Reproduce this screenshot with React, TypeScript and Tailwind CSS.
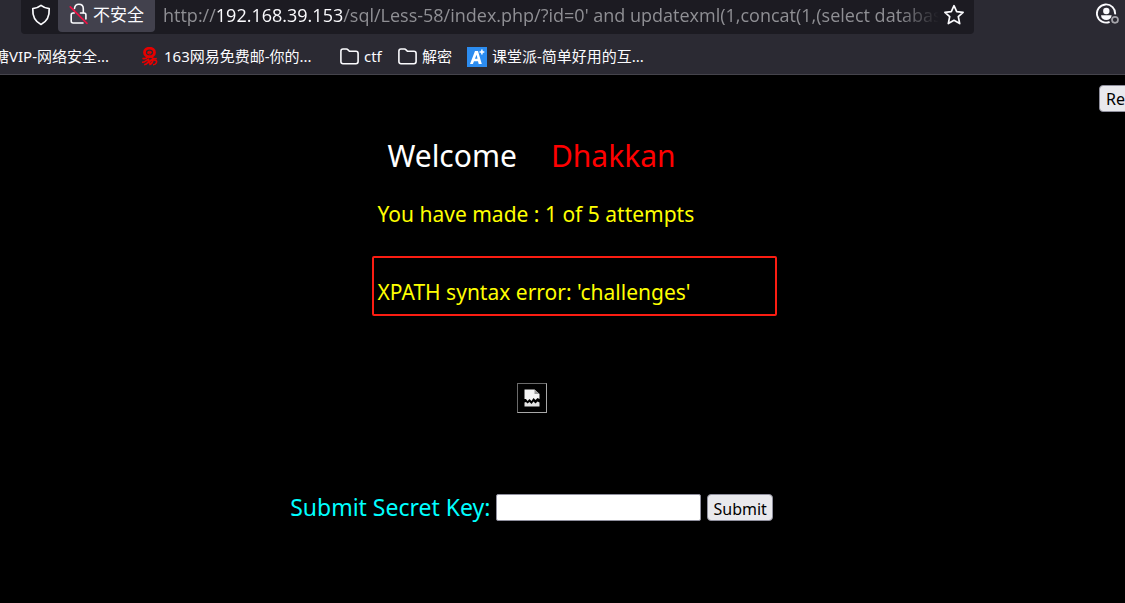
import React from "react";

function ShieldIcon() {
  return (
    <svg width="20" height="22" viewBox="0 0 20 22" fill="none" stroke="#fbfbfe" strokeWidth="1.7" strokeLinejoin="round" aria-hidden="true">
      <path d="M10 1.4 C7.8 3.2 5 4.3 1.8 4.6 C1.4 12 3.6 17.4 10 20.4 C16.4 17.4 18.6 12 18.2 4.6 C15 4.3 12.2 3.2 10 1.4 Z" />
    </svg>
  );
}

function InsecureIcon() {
  return (
    <svg width="20" height="22" viewBox="0 0 20 22" fill="none" aria-hidden="true">
      <g stroke="#fbfbfe" strokeWidth="1.6" strokeLinecap="round">
        <path d="M5.5 5.5 C5.8 2.8 7.6 1.3 9.9 1.3 C12.5 1.3 14.3 3.1 14.3 5.8 V9.8" />
        <path d="M11.5 10 H15 C16.2 10 16.9 10.7 16.9 11.8 V16" />
        <path d="M5.2 10 H4.2 C3 10 2.2 10.8 2.2 12 V18 C2.2 19.3 3 20 4.2 20 H14" />
      </g>
      <path d="M1.3 3.8 L18 20.3" stroke="#ee1144" strokeWidth="1.7" strokeLinecap="round" />
    </svg>
  );
}

function StarIcon() {
  return (
    <svg width="22" height="22" viewBox="0 0 22 22" fill="none" stroke="#fbfbfe" strokeWidth="1.7" strokeLinejoin="round" aria-hidden="true">
      <path d="M11 1.7 L13.7 7.6 L20.1 8.3 L15.3 12.7 L16.7 19.6 L11 16.3 L5.3 19.6 L6.7 12.7 L1.9 8.3 L8.3 7.6 Z" />
    </svg>
  );
}

function AccountIcon() {
  return (
    <svg width="24" height="22" viewBox="0 0 24 22" fill="none" aria-hidden="true">
      <path d="M13.6 18.9 A9.1 9.1 0 1 1 19.1 11.4" stroke="#fbfbfe" strokeWidth="1.9" />
      <circle cx="10.3" cy="8" r="3.2" fill="#fbfbfe" />
      <path d="M5 12.3 H15.6 C15.4 15.6 13.2 17 10.3 17 C7.4 17 5.2 15.6 5 12.3 Z" fill="#fbfbfe" />
      <circle cx="19" cy="16.8" r="3" fill="#2b2a33" stroke="#a5a4aa" strokeWidth="1.7" />
    </svg>
  );
}

function FolderIcon() {
  return (
    <svg width="19" height="17" viewBox="0 0 19 17" fill="none" stroke="#fbfbfe" strokeWidth="1.6" strokeLinejoin="round" aria-hidden="true">
      <path d="M0.9 3.2 C0.9 1.8 1.7 1 3 1 H6.4 C7.2 1 7.6 1.3 8.1 1.9 L9.4 3.3 H15.9 C17.3 3.3 18.1 4 18.1 5.4 V13.6 C18.1 15 17.3 15.7 15.9 15.7 H3 C1.7 15.7 0.9 15 0.9 13.6 Z" />
    </svg>
  );
}

function MailIcon() {
  return (
    <svg width="17" height="19" viewBox="0 0 17 19" fill="none" stroke="#e60000" aria-hidden="true">
      <ellipse cx="8.5" cy="5.4" rx="5" ry="4.2" strokeWidth="2.8" />
      <path d="M6.3 5.5 H10.3 C10.3 3.9 6.8 3.9 6.7 5.5 C6.6 7 8.8 7.2 10.2 6.6" strokeWidth="1.1" />
      <path d="M1.5 11.2 C4 12.4 5.5 11.5 7 9.8 M10 9.8 C11.5 11.6 13.8 12.3 15.8 11.5" strokeWidth="1.7" />
      <path d="M1 15.3 C4 15.4 5.2 13.2 7.6 12.2 C8.4 14.2 6.2 17.4 3.2 17.8 M8 16.5 C8.6 14.4 9.8 12.6 12 12.6 C11.8 15 10.3 17 8.3 17.8 M12.4 13 C15 12.8 16.2 14 15.4 15.8 C14.9 17 13.5 17.8 12 17.8" strokeWidth="1.6" />
    </svg>
  );
}

function APlusIcon() {
  return (
    <svg width="20" height="20" viewBox="0 0 20 20" aria-hidden="true">
      <rect width="20" height="20" fill="#2c8cf0" />
      <path d="M3 17 L8 4 H11 L14.8 17 H11.7 L11 14.2 H7 L5.9 17 Z M7.9 11.8 H10.5 L9.6 7.8 Z" fill="#fff" fillRule="evenodd" />
      <path d="M14.9 2.6 V7.4 M12.5 5 H17.3" stroke="#fff" strokeWidth="1.5" />
    </svg>
  );
}

function BrokenImageIcon() {
  return (
    <svg width="16" height="18" viewBox="0 0 16 18" role="img" aria-label="Image not available">
      <path d="M0.5 0.5 H10.5 L15.5 5 V10 L13.5 9 L11.5 11 L9.5 9 L7.5 12 L5.5 10 L3.5 12 L2 10 L0.5 10 Z" fill="#f4f4f4" />
      <path d="M10.5 0.5 V5 H15.5 Z" fill="#9a9a9a" />
      <path d="M0.5 13.5 L2 13 L3.5 14.5 L5.5 13 L7.5 15 L9.5 12.5 L11.5 14.5 L13.5 12.5 L15.5 13.5 V17.5 H0.5 Z" fill="#e4e4e4" />
    </svg>
  );
}

function BrowserChrome() {
  return (
    <header className="border-b border-[#45444c] bg-[#2b2a33] text-[#fbfbfe]">
      <div className="flex h-[34px] items-start justify-between pr-[5px] pl-[21px]">
        <div className="flex h-full w-[953px] shrink items-start rounded-b bg-[#1c1b22]">
          <button type="button" aria-label="Tracking protection" className="flex h-[29px] w-[37px] items-center justify-center pl-[2px]">
            <ShieldIcon />
          </button>
          <button type="button" className="flex h-8 w-[97px] items-start gap-1 rounded-b bg-[#42414d] pt-[3px] pl-[11px] text-[17px] leading-6 whitespace-nowrap">
            <InsecureIcon />
            <span>不安全</span>
          </button>
          <div className="ml-2 h-[30px] min-w-0 flex-1 overflow-hidden mask-r-from-[calc(100%-40px)] mask-r-to-100% font-['Open_Sans',sans-serif] text-[18px] leading-[30px] whitespace-nowrap text-[#8f8f94]">
            http://<span className="text-[#fbfbfe]">192.168.39.153</span>/sql/Less-58/index.php/?id=0' and updatexml(1,concat(1,(select database
          </div>
          <button type="button" aria-label="Bookmark this page" className="mr-[9px] ml-1 pt-[4px]">
            <StarIcon />
          </button>
        </div>
        <button type="button" aria-label="Account" className="pt-[3px]">
          <AccountIcon />
        </button>
      </div>
      <nav aria-label="Bookmarks" className="flex h-10 items-center overflow-hidden pb-px pt-1.5 text-[15px] whitespace-nowrap">
        <a href="#vip" className="-ml-[6px] w-[147px] shrink-0">塘VIP-网络安全...</a>
        <a href="#mail" className="flex w-[199px] shrink-0 items-center gap-1.5"><MailIcon />163网易免费邮-你的...</a>
        <a href="#ctf" className="flex w-[58px] shrink-0 items-center gap-[5px]"><FolderIcon />ctf</a>
        <a href="#decrypt" className="flex w-[69px] shrink-0 items-center gap-[5px]"><FolderIcon />解密</a>
        <a href="#class" className="flex shrink-0 items-center gap-[5px]"><APlusIcon />课堂派-简单好用的互...</a>
      </nav>
    </header>
  );
}

export default function App() {
  return (
    <div className="flex min-h-screen flex-col overflow-x-hidden bg-black font-['Noto_Sans','Noto_Sans_CJK_SC',sans-serif]">
      <BrowserChrome />
      <main className="flex flex-col">
        <div className="flex h-[52px] justify-end overflow-hidden pt-[10px]">
          <button type="button" className="-mr-[28px] h-[27px] w-[54px] shrink-0 rounded border border-[#8f8f9d] bg-[#e9e9ed] px-1.5 text-left text-[16px] leading-6 text-black">Reset</button>
        </div>
        <div className="flex flex-col items-center pr-[62px]">
          <h1 className="flex gap-[34px] text-[30px] leading-[58px] text-white">
            <span>Welcome</span>
            <span className="text-[#ff0000]">Dhakkan</span>
          </h1>
          <div className="w-[308px] pt-px text-[21px] leading-[56px] whitespace-nowrap text-[#ffff00]">
            <p>You have made : 1 of 5 attempts</p>
            <div className="relative mt-[22px]">
              <p>XPATH syntax error: 'challenges'</p>
              <div className="absolute -top-2 -left-1.5 h-[60px] w-[405px] rounded-xs border-2 border-[#fb1d12]" />
            </div>
          </div>
          <div className="mt-[63px] flex size-[30px] items-center justify-center border border-t-[#6a6a6a] border-r-[#a8a8a8] border-b-[#a8a8a8] border-l-[#6a6a6a]">
            <BrokenImageIcon />
          </div>
          <form className="mt-[74px] flex items-center" onSubmit={(e) => e.preventDefault()}>
            <label htmlFor="key" className="mr-1.5 text-[23px] leading-10 text-[#00ffff]">Submit Secret Key:</label>
            <input id="key" type="text" className="mr-1.5 h-[27px] w-[205px] rounded-xs border border-[#8f8f9d] bg-white px-1 text-[16px]" />
            <button type="submit" className="h-[27px] rounded border border-[#8f8f9d] bg-[#e9e9ed] px-[5px] text-[16px] leading-7 text-black">Submit</button>
          </form>
        </div>
      </main>
    </div>
  );
}
